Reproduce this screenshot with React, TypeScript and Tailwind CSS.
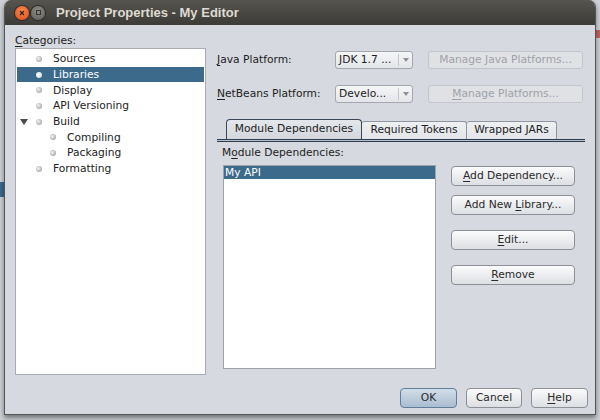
import React from "react";

const ui = "font-['DejaVu_Sans',sans-serif] text-[10.7px]";

type Node = { label: string; level: number; selected?: boolean; expanded?: boolean };

const tree: Node[] = [
  { label: "Sources", level: 0 },
  { label: "Libraries", level: 0, selected: true },
  { label: "Display", level: 0 },
  { label: "API Versioning", level: 0 },
  { label: "Build", level: 0, expanded: true },
  { label: "Compiling", level: 1 },
  { label: "Packaging", level: 1 },
  { label: "Formatting", level: 0 },
];

function Mn({ children }: { children: React.ReactNode }) {
  return <span className="underline underline-offset-[2px] decoration-[1px]">{children}</span>;
}

function TreeRow({ node }: { node: Node }) {
  return (
    <div
      className={`flex h-[15.7px] items-center ${
        node.selected ? "bg-[#3c6a8b] text-white" : "text-[#222]"
      }`}
      style={{ paddingLeft: node.level * 14 }}
    >
      <div className="relative h-full w-[36px] shrink-0">
        {node.expanded && (
          <svg className="absolute left-[3px] top-[5px]" width="8" height="6" viewBox="0 0 8 6">
            <polygon points="0,0 8,0 4,6" fill="#4a4a4a" />
          </svg>
        )}
        <span
          className={`absolute left-[19px] top-[5px] h-[6px] w-[6px] rounded-full ${
            node.selected
              ? "bg-[radial-gradient(circle_at_40%_40%,#ffffff,#c9d3dc)]"
              : "bg-[radial-gradient(circle_at_40%_40%,#f4f4f4,#8e8e8e)]"
          }`}
        />
      </div>
      <span className="whitespace-nowrap pt-[1px]">{node.label}</span>
    </div>
  );
}

function Button({
  children,
  className = "",
  primary,
}: {
  children: React.ReactNode;
  className?: string;
  primary?: boolean;
}) {
  return (
    <div
      className={`flex h-[20px] items-center justify-center rounded-[4px] border ${
        primary
          ? "border-[#5f7e9b] bg-[linear-gradient(#d3dde8,#a9bdd1)]"
          : "border-[#8d9197] bg-[linear-gradient(#fbfbfc,#dcdfe3)]"
      } text-[#2a2a2a] ${className}`}
    >
      {children}
    </div>
  );
}

function Combo({ value }: { value: string }) {
  return (
    <div className="flex h-[18px] w-[78px] rounded-[3px] border border-[#a4a8ae] bg-[linear-gradient(#f5f6f7,#e3e5e9)]">
      <span className="flex-1 truncate pl-[3px] leading-[16px] text-[#1e1e1e]">{value}</span>
      <div className="my-[2px] flex w-[14px] items-center justify-center border-l border-[#c4c7cc]">
        <svg width="6" height="4" viewBox="0 0 6 4">
          <polygon points="0,0 6,0 3,4" fill="#8d9096" />
        </svg>
      </div>
    </div>
  );
}

function Disabled({ children }: { children: React.ReactNode }) {
  return (
    <div className="flex h-[18px] w-[155px] items-center justify-center rounded-[3px] border border-[#c3c6cc] bg-[#dfe1e5] text-[#9ea2a8]">
      {children}
    </div>
  );
}

export default function App() {
  return (
    <div className={`relative h-[420px] w-[600px] overflow-hidden bg-[#cdd0d4] ${ui}`}>
      <div className="absolute left-0 top-[182px] h-[15px] w-[4px] bg-[#3c6a8b]" />
      <div className="absolute right-0 top-[30px] h-[8px] w-[4px] bg-[#c7605a]" />

      <div className="relative ml-[4px] flex h-[415px] w-[592px] flex-col overflow-hidden rounded-t-[7px] border-x border-b border-[#55565a] shadow-[0_3px_5px_rgba(0,0,0,0.45)]">
        {/* title bar */}
        <div className="flex h-[25px] shrink-0 items-center bg-[linear-gradient(#56544e,#3c3b37)]">
          <div className="ml-[10px] flex h-[14px] w-[14px] items-center justify-center rounded-full bg-[radial-gradient(circle_at_50%_35%,#f7894f,#df4a16)] shadow-[0_0_0_1px_#2e2d2a]">
            <svg width="6" height="6" viewBox="0 0 6 6">
              <path d="M1 1L5 5M5 1L1 5" stroke="#3a2016" strokeWidth="1.3" />
            </svg>
          </div>
          <div className="ml-[2px] flex h-[14px] w-[14px] items-center justify-center rounded-full bg-[radial-gradient(circle_at_50%_35%,#8d8b85,#5f5d58)] shadow-[0_0_0_1px_#2e2d2a]">
            <div className="h-[5px] w-[5px] border border-[#35342f]" />
          </div>
          <span className="ml-[11px] font-['Liberation_Sans',sans-serif] text-[13px] font-bold text-[#dfdbd2]">
            Project Properties - My Editor
          </span>
        </div>

        {/* body */}
        <div className="flex flex-1 flex-col bg-[#d6d9df] pl-[10px] pr-[7px]">
          <div className="flex pt-[7px]">
            {/* categories */}
            <div className="w-[191px] shrink-0">
              <div className="h-[16px] leading-[18px] text-[#222]">
                <Mn>C</Mn>ategories:
              </div>
              <div className="h-[327px] border border-[#a9adb3] bg-white px-[1px] pt-[2px]">
                {tree.map((n) => (
                  <TreeRow key={n.label} node={n} />
                ))}
              </div>
            </div>

            {/* right panel */}
            <div className="ml-[11px] w-[368px] pt-[19px] text-[#222]">
              <div className="flex h-[18px] items-center">
                <span className="w-[118px]">
                  <Mn>J</Mn>ava Platform:
                </span>
                <Combo value="JDK 1.7 ..." />
                <div className="ml-[15px]">
                  <Disabled>Manage Java Platforms...</Disabled>
                </div>
              </div>
              <div className="mt-[16px] flex h-[18px] items-center">
                <span className="w-[118px]">
                  <Mn>N</Mn>etBeans Platform:
                </span>
                <Combo value="Develo..." />
                <div className="ml-[15px]">
                  <Disabled>
                    <span>
                      <Mn>M</Mn>anage Platforms...
                    </span>
                  </Disabled>
                </div>
              </div>

              {/* tabs */}
              <div className="mt-[16px]">
                <div className="flex h-[20px] items-end pl-[9px]">
                  <div className="flex h-[20px] w-[136px] items-center justify-center rounded-t-[4px] border-x border-t border-[#3b4757] bg-[linear-gradient(#e4e7eb,#d3d7dd)]">
                    Module Dependencies
                  </div>
                  <div className="flex h-[18px] w-[105px] items-center justify-center rounded-t-[3px] border-r border-t border-[#8f96a0] bg-[linear-gradient(#eef0f2,#e2e5e9)]">
                    Required Tokens
                  </div>
                  <div className="flex h-[18px] w-[90px] items-center justify-center rounded-t-[3px] border-r border-t border-[#8f96a0] bg-[linear-gradient(#eef0f2,#e2e5e9)]">
                    Wrapped JARs
                  </div>
                </div>
                <div className="h-[3px] border-y border-[#2c3a4b] bg-[#b7c3cf]" />
              </div>

              <div className="mt-[4px] h-[14px] pl-[5px] leading-[14px]">
                M<Mn>o</Mn>dule Dependencies:
              </div>
              <div className="mt-[5px] flex">
                <div className="ml-[6px] h-[204px] w-[213px] border border-[#9da2aa] bg-white">
                  <div className="h-[13px] bg-[#3c6a8b] pl-[1px] leading-[13px] text-white">My API</div>
                </div>
                <div className="ml-[15px] flex w-[124px] flex-col pt-[1px]">
                  <Button>
                    <span>
                      <Mn>A</Mn>dd Dependency...
                    </span>
                  </Button>
                  <Button className="mt-[9px]">
                    <span>
                      Add New <Mn>L</Mn>ibrary...
                    </span>
                  </Button>
                  <Button className="mt-[15px]">
                    <span>
                      <Mn>E</Mn>dit...
                    </span>
                  </Button>
                  <Button className="mt-[15px]">
                    <span>
                      <Mn>R</Mn>emove
                    </span>
                  </Button>
                </div>
              </div>
            </div>
          </div>

          {/* dialog buttons */}
          <div className="mt-[13px] flex justify-end gap-[9px]">
            <Button primary className="w-[57px]">
              OK
            </Button>
            <Button className="w-[56px]">Cancel</Button>
            <Button className="w-[57px]">
              <span>
                <Mn>H</Mn>elp
              </span>
            </Button>
          </div>
        </div>
      </div>
    </div>
  );
}
